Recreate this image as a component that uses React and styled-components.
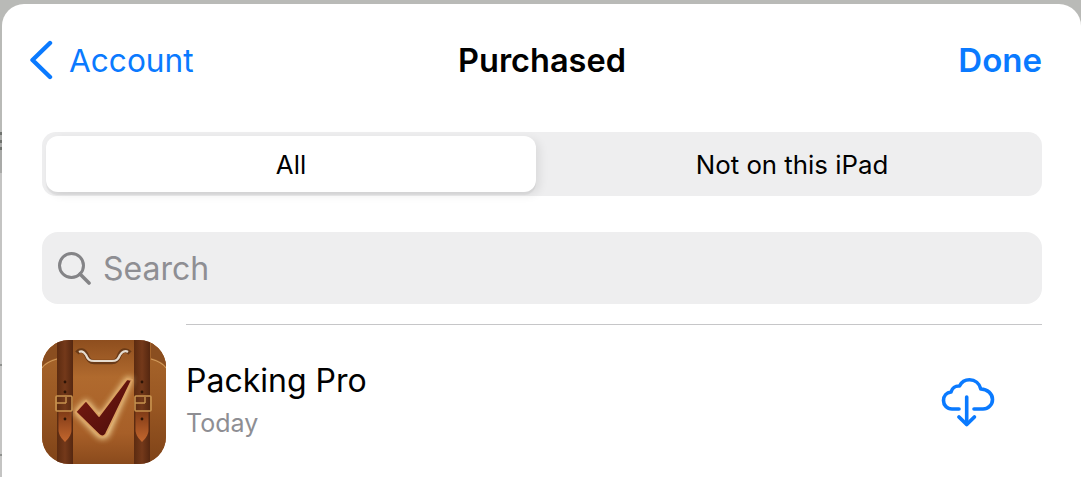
import React from 'react';
import styled, { createGlobalStyle } from 'styled-components';

const GlobalStyle = createGlobalStyle`
  html, body {
    margin: 0;
    height: 100%;
    background: #b9bab7;
  }
  body {
    font-family: Inter, "Liberation Sans", sans-serif;
    -webkit-font-smoothing: antialiased;
  }
`;

const Page = styled.div`
  width: 1081px;
  height: 477px;
  overflow: hidden;
  padding: 4px 0 0 2px;
  box-sizing: border-box;
  background: linear-gradient(
    to bottom,
    #b9bab7 0 132px,
    #70736f 132px 135px,
    #a9aaa8 135px 140px,
    #70736f 140px 143px,
    #a9aaa8 143px 147px,
    #70736f 147px 150px,
    #a9aaa8 150px 173px,
    #c4c4c3 173px 364px,
    #8f918e 364px 366px,
    #c4c4c3 366px 454px,
    #8f918e 454px 456px,
    #c4c4c3 456px
  );
`;

const Sheet = styled.div`
  background: #fff;
  height: 473px;
  border-radius: 22px 22px 0 0;
  padding: 0 39px 0 40px;
  box-sizing: border-box;
`;

const NavBar = styled.div`
  height: 128px;
  display: flex;
  align-items: flex-start;
  justify-content: space-between;
  padding-top: 36px;
  box-sizing: border-box;
  position: relative;
`;

const NavLink = styled.div`
  display: flex;
  align-items: center;
  gap: 16px;
  height: 40px;
  color: #0a7aff;
  font-size: ${props => (props.$bold ? '33px' : '31.6px')};
  font-weight: ${props => (props.$bold ? 600 : 400)};
  margin-left: ${props => (props.$back ? '-13px' : 0)};
`;

const NavTitle = styled.div`
  position: absolute;
  left: 0;
  right: 0;
  top: 37px;
  height: 40px;
  line-height: 40px;
  text-align: center;
  font-size: 32.5px;
  font-weight: 600;
  color: #000;
`;

const Segments = styled.div`
  height: 64px;
  background: #eeeeef;
  border-radius: 14px;
  padding: 4px;
  box-sizing: border-box;
  display: grid;
  grid-template-columns: 490px 1fr;
`;

const Segment = styled.div`
  display: flex;
  align-items: center;
  justify-content: center;
  padding-left: ${props => (props.$active ? 0 : '10px')};
  font-size: 25.8px;
  font-weight: 400;
  color: #000;
  background: ${props => (props.$active ? '#fff' : 'transparent')};
  border-radius: 12px;
  box-shadow: ${props => (props.$active ? '4px 3px 10px rgba(0,0,0,0.08), 0 3px 1px rgba(0,0,0,0.05)' : 'none')};
`;

const SearchField = styled.div`
  margin-top: 36px;
  height: 72px;
  background: #eeeeef;
  border-radius: 16px;
  display: flex;
  align-items: center;
  padding-left: 15px;
  gap: 12px;
  color: #8e8e93;
  font-size: 32px;
`;

const AppRow = styled.div`
  margin-top: 20px;
  display: grid;
  grid-template-columns: 144px 1fr auto;
`;

const IconCell = styled.div`
  padding-top: 16px;
`;

const RowBody = styled.div`
  border-top: 1px solid #c6c6c8;
  height: 150px;
  display: flex;
  align-items: flex-start;
  justify-content: space-between;
  grid-column: 2 / 4;
`;

const AppText = styled.div`
  padding-top: 36px;
`;

const AppName = styled.div`
  font-size: 32px;
  line-height: 40px;
  color: #000;
`;

const AppDate = styled.div`
  margin-top: 7px;
  font-size: 25px;
  line-height: 30px;
  color: #8e8e93;
`;

const CloudButton = styled.div`
  margin: 52px 47px 0 0;
  color: #0a7aff;
`;

const BackIcon = () => (
  <svg width="24" height="40" viewBox="0 0 24 40" fill="none">
    <path d="M21 3 L3.5 20 L21 37" stroke="#0a7aff" strokeWidth="4.4" strokeLinecap="round" strokeLinejoin="round" />
  </svg>
);

const SearchIcon = () => (
  <svg width="34" height="34" viewBox="0 0 34 34" fill="none">
    <circle cx="14.5" cy="14.5" r="12" stroke="#848487" strokeWidth="3" />
    <path d="M23 23 L32 32" stroke="#848487" strokeWidth="3.6" strokeLinecap="round" />
  </svg>
);

const CloudIcon = () => (
  <svg width="54" height="52" viewBox="0 0 54 52" fill="none" stroke="currentColor" strokeLinecap="round" strokeLinejoin="round">
    <path
      d="M18 32 H11 C6 32 2.5 28.3 2.5 23.5 C2.5 19 5.7 15.5 10 15 C11 11 14.5 8.6 18.5 9 C20.5 5 24.5 2.8 28.5 2.8 C34 2.8 38.5 6.5 39.8 12 C46.5 12 51.5 17 51.5 22.5 C51.5 28 47 32 42 32 H33"
      strokeWidth="3.6"
    />
    <path d="M25.7 20 V47" strokeWidth="3.6" />
    <path d="M18 40 L25.7 47.5 L33.4 40" strokeWidth="3.8" />
  </svg>
);

const AppIcon = () => (
  <svg width="124" height="124" viewBox="0 0 124 124">
    <defs>
      <linearGradient id="leather" x1="0" y1="0" x2="0" y2="1">
        <stop offset="0" stopColor="#8e4e1e" />
        <stop offset="0.3" stopColor="#b06a2e" />
        <stop offset="0.75" stopColor="#a75f28" />
        <stop offset="1" stopColor="#8a4a1c" />
      </linearGradient>
      <linearGradient id="side" x1="0" y1="0" x2="0" y2="1">
        <stop offset="0" stopColor="#a9672c" />
        <stop offset="0.5" stopColor="#9a5823" />
        <stop offset="1" stopColor="#7f4318" />
      </linearGradient>
      <linearGradient id="strap" x1="0" y1="0" x2="1" y2="0">
        <stop offset="0" stopColor="#5c2b10" />
        <stop offset="0.5" stopColor="#74391a" />
        <stop offset="1" stopColor="#552710" />
      </linearGradient>
      <linearGradient id="tip" x1="0" y1="0" x2="0" y2="1">
        <stop offset="0" stopColor="#7f3a16" />
        <stop offset="1" stopColor="#c4672e" />
      </linearGradient>
      <linearGradient id="check" x1="0" y1="0" x2="1" y2="1">
        <stop offset="0" stopColor="#7c1c12" />
        <stop offset="1" stopColor="#4a0c0a" />
      </linearGradient>
      <filter id="glow" x="-30%" y="-30%" width="160%" height="160%">
        <feGaussianBlur stdDeviation="3.2" />
      </filter>
      <clipPath id="squircle">
        <rect width="124" height="124" rx="27" />
      </clipPath>
    </defs>
    <g clipPath="url(#squircle)">
      <rect width="124" height="124" fill="url(#leather)" />
      <rect x="0" y="0" width="16" height="124" fill="url(#side)" />
      <rect x="108" y="0" width="16" height="124" fill="url(#side)" />
      <path d="M0 27 C3 22 8 20 15 18 V0 H0 Z" fill="#8a4e20" />
      <path d="M124 27 C121 22 116 20 109 18 V0 H124 Z" fill="#8a4e20" />
      <path d="M0 28 C3 23 8 21 15 19" fill="none" stroke="#d09a5c" strokeWidth="1.2" />
      <path d="M124 28 C121 23 116 21 109 19" fill="none" stroke="#d09a5c" strokeWidth="1.2" />
      <rect x="15" y="0" width="16" height="124" fill="url(#strap)" />
      <rect x="92" y="0" width="16" height="124" fill="url(#strap)" />
      <path d="M16.5 71 H29.5 V90 C29.5 95 26 99 23 102 C20 99 16.5 95 16.5 90 Z" fill="url(#tip)" />
      <path d="M93.5 71 H106.5 V90 C106.5 95 103 99 100 102 C97 99 93.5 95 93.5 90 Z" fill="url(#tip)" />
      <circle cx="23" cy="42" r="1.4" fill="#2d1406" />
      <circle cx="23" cy="52" r="1.4" fill="#2d1406" />
      <circle cx="23" cy="79" r="1.4" fill="#2d1406" />
      <circle cx="100" cy="42" r="1.4" fill="#2d1406" />
      <circle cx="100" cy="52" r="1.4" fill="#2d1406" />
      <circle cx="100" cy="79" r="1.4" fill="#2d1406" />
      <rect x="14" y="56" width="16" height="15" rx="1" fill="none" stroke="#c8934f" strokeWidth="1.6" />
      <path d="M14 63 H24 M24 57 V63" fill="none" stroke="#c8934f" strokeWidth="1.4" />
      <rect x="93" y="56" width="16" height="15" rx="1" fill="none" stroke="#c8934f" strokeWidth="1.6" />
      <path d="M93 63 H103 M103 57 V63" fill="none" stroke="#c8934f" strokeWidth="1.4" />
      <path d="M35 13 C38 9 42 10 44 14 C46 20 48 22 52 22 H70 C74 22 76 20 78 14 C80 10 84 9 88 13" fill="none" stroke="#6a3a17" strokeWidth="4.6" />
      <path d="M37 12 C40 10 42 12 44 15 C46 20 48 21 52 21 H70 C74 21 76 20 78 15 C80 12 83 10 86 12" fill="none" stroke="#e6dccf" strokeWidth="2.2" />
      <path d="M32 72 L44 59 L58 75 L85 37 L91 38 L66 97 C62 99 58 99 56 97 Z" fill="#ffe7a8" opacity="0.95" filter="url(#glow)" />
      <path d="M33.5 72 L44 60.5 L57 76 L85 39 L90 40 L64 94 C62 97 59 97 57 95 Z" fill="url(#check)" stroke="#dba060" strokeWidth="1.8" strokeLinejoin="round" />
    </g>
  </svg>
);

const App = () => {
  return (
    <Page>
      <GlobalStyle />
      <Sheet>
        <NavBar>
          <NavLink $back>
            <BackIcon />
            Account
          </NavLink>
          <NavTitle>Purchased</NavTitle>
          <NavLink $bold>Done</NavLink>
        </NavBar>
        <Segments>
          <Segment $active>All</Segment>
          <Segment>Not on this iPad</Segment>
        </Segments>
        <SearchField>
          <SearchIcon />
          Search
        </SearchField>
        <AppRow>
          <IconCell>
            <AppIcon />
          </IconCell>
          <RowBody>
            <AppText>
              <AppName>Packing Pro</AppName>
              <AppDate>Today</AppDate>
            </AppText>
            <CloudButton>
              <CloudIcon />
            </CloudButton>
          </RowBody>
        </AppRow>
      </Sheet>
    </Page>
  );
};

export default App;
